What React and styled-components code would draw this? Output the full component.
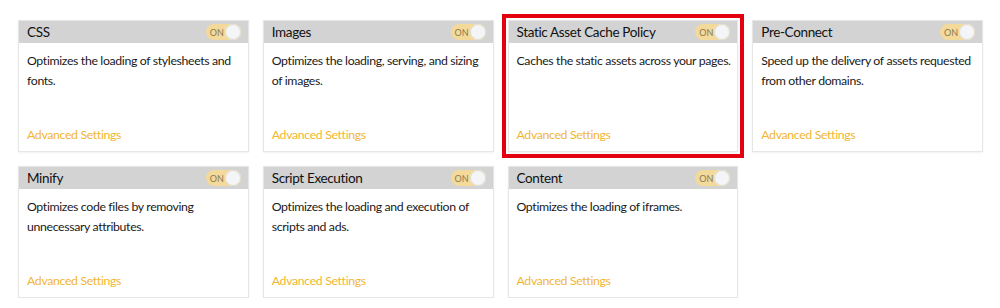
import React from 'react';
import styled, { createGlobalStyle } from 'styled-components';

const GlobalStyle = createGlobalStyle`
  html, body {
    margin: 0;
    padding: 0;
    background: #ffffff;
    font-family: Lato, "Open Sans", sans-serif;
  }
`;

const Grid = styled.div`
  display: grid;
  grid-template-columns: repeat(4, 1fr);
  gap: 14px;
  padding: 20px 17px 0 18px;
`;

const Card = styled.div`
  display: flex;
  flex-direction: column;
  height: 132px;
  box-sizing: border-box;
  background: #fff;
  border: 1px solid #e6e6e6;
  box-shadow: 0 1px 2px rgba(0, 0, 0, 0.06);
  outline: ${(props) => (props.highlight ? '4px solid #e3000f' : 'none')};
  outline-offset: 2px;
`;

const Header = styled.div`
  display: flex;
  align-items: center;
  justify-content: space-between;
  height: 22px;
  padding: 0 7px 0 8px;
  background: #d3d3d3;
`;

const Title = styled.span`
  font-size: 13.5px;
  letter-spacing: -0.35px;
  color: #111;
`;

const Toggle = styled.div`
  display: flex;
  align-items: center;
  justify-content: space-between;
  width: 35px;
  height: 16px;
  border-radius: 8px;
  background: #f3d99a;
  padding-left: 4px;
  box-sizing: border-box;
`;

const ToggleLabel = styled.span`
  font-size: 9px;
  color: #8a7a55;
`;

const Knob = styled.span`
  width: 16px;
  height: 16px;
  border-radius: 50%;
  background: #f4f5f7;
  box-shadow: 0 0 0 1px #e2dccd inset;
`;

const Body = styled.div`
  flex: 1;
  display: flex;
  flex-direction: column;
  justify-content: space-between;
  padding: 8px 6px 9px 8px;
`;

const Description = styled.p`
  margin: 0;
  font-size: 12.3px;
  letter-spacing: -0.35px;
  line-height: 20px;
  color: #1a1a1a;
`;

const SettingsLink = styled.a`
  font-size: 12.3px;
  letter-spacing: -0.35px;
  color: #f2b632;
  text-decoration: none;
  cursor: pointer;
`;

const items = [
  { title: 'CSS', text: 'Optimizes the loading of stylesheets and fonts.' },
  { title: 'Images', text: 'Optimizes the loading, serving, and sizing of images.' },
  { title: 'Static Asset Cache Policy', text: 'Caches the static assets across your pages.', highlight: true },
  { title: 'Pre-Connect', text: 'Speed up the delivery of assets requested from other domains.' },
  { title: 'Minify', text: 'Optimizes code files by removing unnecessary attributes.' },
  { title: 'Script Execution', text: 'Optimizes the loading and execution of scripts and ads.' },
  { title: 'Content', text: 'Optimizes the loading of iframes.' },
];

const App = () => {
  return (
    <>
      <GlobalStyle />
      <Grid>
        {items.map((item) => (
          <Card key={item.title} highlight={item.highlight}>
            <Header>
              <Title>{item.title}</Title>
              <Toggle>
                <ToggleLabel>ON</ToggleLabel>
                <Knob />
              </Toggle>
            </Header>
            <Body>
              <Description>{item.text}</Description>
              <SettingsLink>Advanced Settings</SettingsLink>
            </Body>
          </Card>
        ))}
      </Grid>
    </>
  );
};

export default App;
